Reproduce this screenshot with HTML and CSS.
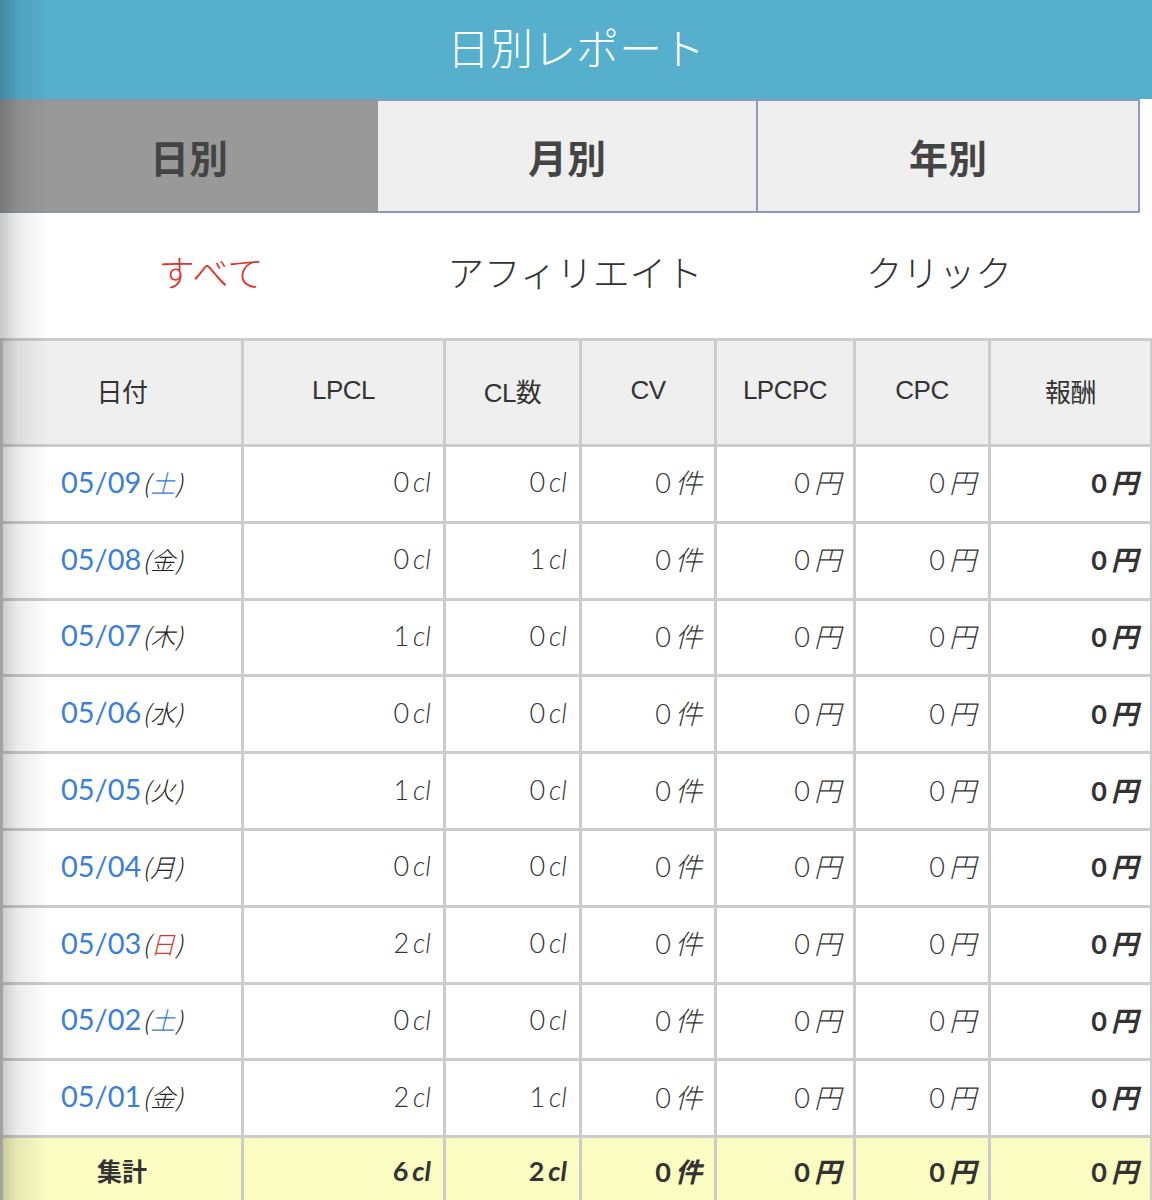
FILE: index.html
```html
<!DOCTYPE html>
<html lang="ja">
<head>
<meta charset="utf-8">
<title>日別レポート</title>
<link rel="stylesheet" href="styles.css">
</head>
<body>
<div class="page">
  <header class="topbar"><h1 class="title">日別レポート</h1></header>
  <nav class="tabs">
    <div class="tab active">日別</div>
    <div class="tab">月別</div>
    <div class="tab">年別</div>
  </nav>
  <nav class="subtabs">
    <div class="subtab current">すべて</div>
    <div class="subtab">アフィリエイト</div>
    <div class="subtab">クリック</div>
  </nav>
  <table class="report">
    <colgroup>
      <col class="c1"><col class="c2"><col class="c3"><col class="c4"><col class="c5"><col class="c6"><col class="c7">
    </colgroup>
    <thead>
      <tr><th>日付</th><th>LPCL</th><th>CL数</th><th>CV</th><th>LPCPC</th><th>CPC</th><th>報酬</th></tr>
    </thead>
    <tbody>
      <tr><td class="date"><span class="d">05/09</span><i class="wd">(<span class="sat">土</span>)</i></td><td>0<i>cl</i></td><td>0<i>cl</i></td><td>0<i>件</i></td><td>0<i>円</i></td><td>0<i>円</i></td><td class="strong">0<i>円</i></td></tr>
      <tr><td class="date"><span class="d">05/08</span><i class="wd">(金)</i></td><td>0<i>cl</i></td><td>1<i>cl</i></td><td>0<i>件</i></td><td>0<i>円</i></td><td>0<i>円</i></td><td class="strong">0<i>円</i></td></tr>
      <tr><td class="date"><span class="d">05/07</span><i class="wd">(木)</i></td><td>1<i>cl</i></td><td>0<i>cl</i></td><td>0<i>件</i></td><td>0<i>円</i></td><td>0<i>円</i></td><td class="strong">0<i>円</i></td></tr>
      <tr><td class="date"><span class="d">05/06</span><i class="wd">(水)</i></td><td>0<i>cl</i></td><td>0<i>cl</i></td><td>0<i>件</i></td><td>0<i>円</i></td><td>0<i>円</i></td><td class="strong">0<i>円</i></td></tr>
      <tr><td class="date"><span class="d">05/05</span><i class="wd">(火)</i></td><td>1<i>cl</i></td><td>0<i>cl</i></td><td>0<i>件</i></td><td>0<i>円</i></td><td>0<i>円</i></td><td class="strong">0<i>円</i></td></tr>
      <tr><td class="date"><span class="d">05/04</span><i class="wd">(月)</i></td><td>0<i>cl</i></td><td>0<i>cl</i></td><td>0<i>件</i></td><td>0<i>円</i></td><td>0<i>円</i></td><td class="strong">0<i>円</i></td></tr>
      <tr><td class="date"><span class="d">05/03</span><i class="wd">(<span class="sun">日</span>)</i></td><td>2<i>cl</i></td><td>0<i>cl</i></td><td>0<i>件</i></td><td>0<i>円</i></td><td>0<i>円</i></td><td class="strong">0<i>円</i></td></tr>
      <tr><td class="date"><span class="d">05/02</span><i class="wd">(<span class="sat">土</span>)</i></td><td>0<i>cl</i></td><td>0<i>cl</i></td><td>0<i>件</i></td><td>0<i>円</i></td><td>0<i>円</i></td><td class="strong">0<i>円</i></td></tr>
      <tr><td class="date"><span class="d">05/01</span><i class="wd">(金)</i></td><td>2<i>cl</i></td><td>1<i>cl</i></td><td>0<i>件</i></td><td>0<i>円</i></td><td>0<i>円</i></td><td class="strong">0<i>円</i></td></tr>
    </tbody>
    <tfoot>
      <tr><th>集計</th><td>6<i>cl</i></td><td>2<i>cl</i></td><td>0<i>件</i></td><td>0<i>円</i></td><td>0<i>円</i></td><td>0<i>円</i></td></tr>
    </tfoot>
  </table>
</div>
</body>
</html>
```

FILE: styles.css
```css
html, body {
  margin: 0;
  padding: 0;
  background: #ffffff;
}
body {
  font-family: "Liberation Sans", "Noto Sans CJK JP", sans-serif;
  color: #333333;
}
.page {
  position: relative;
  width: 1152px;
  overflow: hidden;
}
.page::before {
  content: "";
  position: absolute;
  left: 0;
  top: 0;
  bottom: 0;
  width: 50px;
  background: linear-gradient(to right, rgba(0,0,0,0.22), rgba(0,0,0,0.08) 18px, rgba(0,0,0,0) 50px);
  pointer-events: none;
  z-index: 5;
}
.topbar {
  height: 99px;
  background: #55afcd;
  display: flex;
  align-items: center;
  justify-content: center;
}
.title {
  margin: 0;
  font-family: "Noto Sans CJK JP", sans-serif;
  font-weight: 300;
  font-size: 43px;
  color: #ffffff;
  line-height: 1;
  padding-bottom: 6px;
}
.tabs {
  display: grid;
  grid-template-columns: 378px 380px 382px;
  width: 1140px;
  height: 114px;
}
.tab {
  display: flex;
  align-items: center;
  justify-content: center;
  background: #efefef;
  border-top: 2px solid #8f99bb;
  border-bottom: 2px solid #8f99bb;
  border-right: 2px solid #8f99bb;
  font-family: "Noto Sans CJK JP", sans-serif;
  font-weight: 700;
  font-size: 39px;
  color: #444444;
}
.tab:first-child {
  border-right: none;
}
.tab.active {
  background: #999999;
  border-top-color: #8f95a8;
  border-bottom-color: #8f95a8;
}
.subtabs {
  display: grid;
  grid-template-columns: 364px 364px 364px;
  padding-left: 29px;
  height: 125px;
  align-items: center;
}
.subtab {
  text-align: center;
  font-family: "Noto Sans CJK JP", sans-serif;
  font-weight: 300;
  font-size: 36.5px;
  color: #333333;
  line-height: 1;
  padding-bottom: 6px;
}
.subtab.current {
  color: #e0352b;
}
.report {
  border-collapse: collapse;
  table-layout: fixed;
  width: 1150px;
}
.c1 { width: 241px; }
.c2 { width: 202px; }
.c3 { width: 136px; }
.c4 { width: 135px; }
.c5 { width: 139px; }
.c6 { width: 135px; }
.c7 { width: 162px; }
.report th,
.report td {
  border: 3px solid #cccccc;
  padding: 0;
}
.report thead th {
  height: 98px;
  padding-bottom: 5px;
  background: #efefef;
  font-weight: 400;
  font-size: 26px;
  color: #333333;
  text-align: center;
  font-family: "Liberation Sans", "Noto Sans CJK JP", sans-serif;
  letter-spacing: -0.5px;
}
.report tbody td {
  height: 69.8px;
  padding-bottom: 4px;
  text-align: right;
  padding-right: 12px;
  font-family: "Lato", "Noto Sans CJK JP", sans-serif;
  font-size: 27px;
  font-weight: 300;
  color: #333333;
}
.report td i {
  font-style: italic;
  margin-left: 4px;
}
.report tbody td.date {
  text-align: center;
  padding-right: 0;
  font-size: 29px;
}
.date .d {
  color: #3b80d6;
  font-weight: 400;
}
.date .wd {
  font-family: "Noto Sans CJK JP", sans-serif;
  font-style: italic;
  font-size: 25px;
  color: #222222;
  margin-left: 1px;
}
.sat { color: #3b80d6; }
.sun { color: #e0352b; }
.report tbody td.strong {
  font-weight: 700;
  color: #333333;
}
.report tfoot th,
.report tfoot td {
  height: 64px;
  padding-bottom: 2px;
  background: #fcfdc3;
  font-weight: 700;
  color: #333333;
  vertical-align: middle;
}
.report tfoot th {
  font-family: "Noto Sans CJK JP", sans-serif;
  font-size: 25px;
  text-align: center;
}
.report tfoot td {
  text-align: right;
  padding-right: 12px;
  font-family: "Lato", "Noto Sans CJK JP", sans-serif;
  font-size: 27px;
}
```
